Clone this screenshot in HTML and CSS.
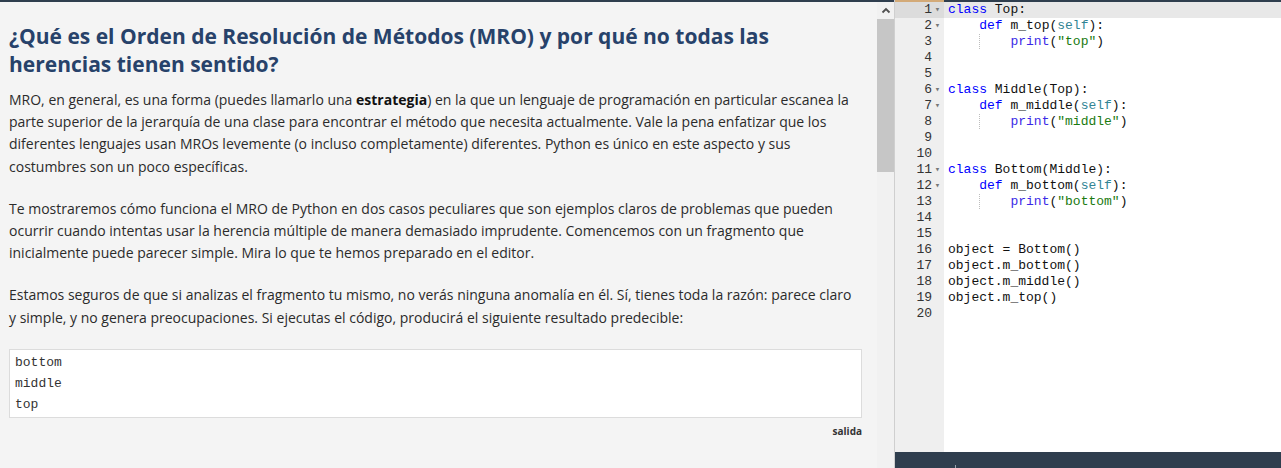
FILE: index.html
```html
<!DOCTYPE html>
<html lang="es">
<head>
<meta charset="utf-8">
<title>MRO</title>
<link rel="stylesheet" href="styles.css">
</head>
<body>
<div class="app">
  <div class="left">
    <div class="content">
      <h2 class="title">¿Qué es el Orden de Resolución de Métodos (MRO) y por qué no todas las herencias tienen sentido?</h2>
      <p>MRO, en general, es una forma (puedes llamarlo una <strong>estrategia</strong>) en la que un lenguaje de programación en particular escanea la parte superior de la jerarquía de una clase para encontrar el método que necesita actualmente. Vale la pena enfatizar que los diferentes lenguajes usan MROs levemente (o incluso completamente) diferentes. Python es único en este aspecto y sus costumbres son un poco específicas.</p>
      <p>Te mostraremos cómo funciona el MRO de Python en dos casos peculiares que son ejemplos claros de problemas que pueden ocurrir cuando intentas usar la herencia múltiple de manera demasiado imprudente. Comencemos con un fragmento que inicialmente puede parecer simple. Mira lo que te hemos preparado en el editor.</p>
      <p>Estamos seguros de que si analizas el fragmento tu mismo, no verás ninguna anomalía en él. Sí, tienes toda la razón: parece claro y simple, y no genera preocupaciones. Si ejecutas el código, producirá el siguiente resultado predecible:</p>
      <pre class="output">bottom
middle
top</pre>
      <div class="caption">salida</div>
    </div>
  </div>
  <div class="scrollbar">
    <div class="scroll-up"><svg width="10" height="7" viewBox="0 0 10 7"><path d="M1.5 5.5 L5 2 L8.5 5.5" fill="none" stroke="#505050" stroke-width="1.8"/></svg></div>
    <div class="scroll-thumb"></div>
  </div>
  <div class="editor">
    <div class="editor-main">
      <div class="gutter">
        <div class="gl active">1<span class="fold">▾</span></div>
        <div class="gl">2<span class="fold">▾</span></div>
        <div class="gl">3<span class="fold"></span></div>
        <div class="gl">4<span class="fold"></span></div>
        <div class="gl">5<span class="fold"></span></div>
        <div class="gl">6<span class="fold">▾</span></div>
        <div class="gl">7<span class="fold">▾</span></div>
        <div class="gl">8<span class="fold"></span></div>
        <div class="gl">9<span class="fold"></span></div>
        <div class="gl">10<span class="fold"></span></div>
        <div class="gl">11<span class="fold">▾</span></div>
        <div class="gl">12<span class="fold">▾</span></div>
        <div class="gl">13<span class="fold"></span></div>
        <div class="gl">14<span class="fold"></span></div>
        <div class="gl">15<span class="fold"></span></div>
        <div class="gl">16<span class="fold"></span></div>
        <div class="gl">17<span class="fold"></span></div>
        <div class="gl">18<span class="fold"></span></div>
        <div class="gl">19<span class="fold"></span></div>
        <div class="gl">20<span class="fold"></span></div>
      </div>
      <div class="code">
        <div class="cl active"><span class="kw">class</span> Top:</div>
        <div class="cl">    <span class="kw">def</span> m_top(<span class="self">self</span>):</div>
        <div class="cl"><span class="guide">    </span>    <span class="fn">print</span>(<span class="str">"top"</span>)</div>
        <div class="cl"> </div>
        <div class="cl"> </div>
        <div class="cl"><span class="kw">class</span> Middle(Top):</div>
        <div class="cl">    <span class="kw">def</span> m_middle(<span class="self">self</span>):</div>
        <div class="cl"><span class="guide">    </span>    <span class="fn">print</span>(<span class="str">"middle"</span>)</div>
        <div class="cl"> </div>
        <div class="cl"> </div>
        <div class="cl"><span class="kw">class</span> Bottom(Middle):</div>
        <div class="cl">    <span class="kw">def</span> m_bottom(<span class="self">self</span>):</div>
        <div class="cl"><span class="guide">    </span>    <span class="fn">print</span>(<span class="str">"bottom"</span>)</div>
        <div class="cl"> </div>
        <div class="cl"> </div>
        <div class="cl">object = Bottom()</div>
        <div class="cl">object.m_bottom()</div>
        <div class="cl">object.m_middle()</div>
        <div class="cl">object.m_top()</div>
        <div class="cl"> </div>
      </div>
    </div>
    <div class="editor-footer"><span class="tick"></span></div>
  </div>
</div>
</body>
</html>
```
FILE: styles.css
```css
* { box-sizing: border-box; }
html, body { margin: 0; padding: 0; }
body {
  width: 1281px;
  height: 468px;
  overflow: hidden;
  font-family: "Open Sans", "Liberation Sans", sans-serif;
  background: #f4f4f4;
}
.app {
  display: flex;
  height: 468px;
}
.left {
  flex: 0 0 877px;
  border-top: 2px solid #2f3e4e;
  background: #f4f4f4;
  overflow: hidden;
}
.content {
  padding: 20px 15px 0 9px;
}
.title {
  margin: 0 0 11px 0;
  font-size: 21px;
  line-height: 28px;
  font-weight: 700;
  color: #27426a;
}
.content p {
  margin: 0 0 20px 0;
  font-size: 14px;
  line-height: 22.2px;
  color: #2b2b2b;
}
.content p strong { color: #111; }
.output {
  margin: 0;
  margin-top: 1px;
  background: #fff;
  border: 1px solid #dcdcdc;
  padding: 2px 6px 1px 5px;
  font-family: "Liberation Mono", "Courier New", monospace;
  font-size: 13px;
  line-height: 21.3px;
  color: #333;
}
.caption {
  text-align: right;
  font-size: 10px;
  font-weight: 700;
  color: #333;
  margin-top: 6px;
}
.scrollbar {
  flex: 0 0 17px;
  border-top: 2px solid #2f3e4e;
  background: #f1f1f1;
  display: flex;
  flex-direction: column;
}
.scroll-up {
  height: 17px;
  display: flex;
  align-items: center;
  justify-content: center;
}
.scroll-thumb {
  height: 153px;
  background: #c6c6c6;
}
.editor {
  flex: 1;
  display: flex;
  flex-direction: column;
  border-left: 1px solid #cfcfcf;
  background: #fff;
}
.editor-main {
  flex: 1;
  display: flex;
}
.gutter {
  flex: 0 0 49px;
  background: #efefef;
  border-top: 2px solid #d3aa78;
  font-family: "Liberation Mono", "Courier New", monospace;
  font-size: 13px;
  color: #333;
}
.gl {
  height: 16px;
  line-height: 16px;
  display: flex;
  justify-content: flex-end;
  padding-right: 1px;
}
.gl.active { background: #dcdcdc; }
.fold {
  width: 11px;
  font-size: 9px;
  color: #777;
  text-align: center;
  line-height: 16px;
}
.code {
  flex: 1;
  border-top: 2px solid #2f3e4e;
  font-family: "Liberation Mono", "Courier New", monospace;
  font-size: 13px;
  color: #111;
}
.cl {
  height: 16px;
  line-height: 16px;
  padding-left: 4px;
  white-space: pre;
}
.cl.active { background: #e8e8e8; }
.kw { color: #0000ff; }
.fn { color: #3b29e6; }
.self { color: #318495; }
.str { color: #1a7a10; }
.guide {
  background-image: linear-gradient(#bdbdbd 50%, transparent 50%);
  background-size: 1px 2px;
  background-repeat: repeat-y;
  background-position: 31px 0;
}
.editor-footer {
  height: 16px;
  background: #2f3e4e;
  position: relative;
}
.tick {
  position: absolute;
  left: 60px;
  bottom: 0;
  width: 1px;
  height: 3px;
  background: #9aa3ad;
}
```
